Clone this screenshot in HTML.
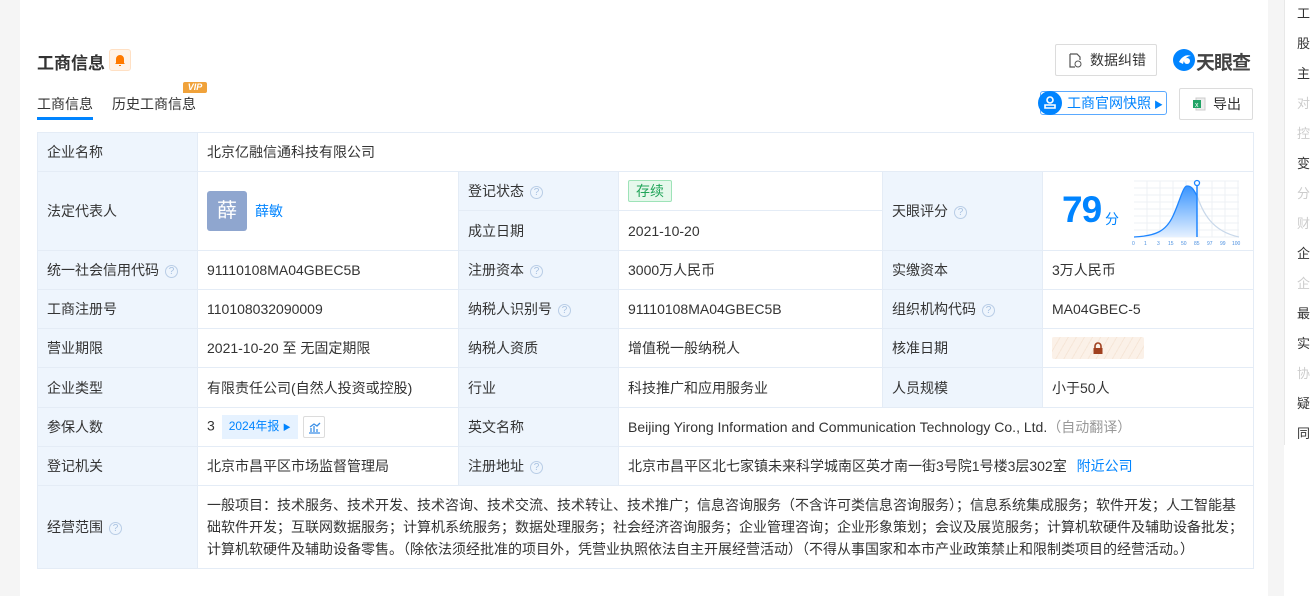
<!DOCTYPE html>
<html><head><meta charset="utf-8">
<style>
*{margin:0;padding:0;box-sizing:border-box}
body{width:1310px;height:596px;overflow:hidden;background:#f5f5f5;font-family:"Liberation Sans","Noto Sans CJK SC",sans-serif;font-size:14px;color:#333;position:relative}
.card{position:absolute;left:20px;top:0;width:1248px;height:596px;background:#fff}
.side{position:absolute;left:1284px;top:0;width:26px;height:596px;background:#fff}
.side .ln{position:absolute;left:0;top:0;width:1px;height:445px;background:#e8e8e8}
.side div.t{position:absolute;left:13px;font-size:13px;line-height:16px;width:20px;overflow:hidden;white-space:nowrap}
.abs{position:absolute}
table{position:absolute;left:37px;top:132px;width:1216px;border-collapse:collapse;table-layout:fixed}
td{border:1px solid #e4ecf6;padding:0 0 0 9px;height:39px;vertical-align:middle;white-space:nowrap}
td.l{background:#eef5fd}
.q{display:inline-block;width:13px;height:13px;border:1px solid #b9cde6;border-radius:50%;color:#a9c2e2;font-size:10px;line-height:11px;text-align:center;vertical-align:middle;margin-left:6px}
.blue{color:#0084ff}
</style></head><body>
<div class="card"></div>
<div class="side"><div class="ln"></div>
<div class="t" style="top:6px">工</div><div class="t" style="top:36px">股</div><div class="t" style="top:66px">主</div><div class="t" style="top:96px;color:#ccc">对</div><div class="t" style="top:126px;color:#ccc">控</div><div class="t" style="top:156px">变</div><div class="t" style="top:186px;color:#ccc">分</div><div class="t" style="top:216px;color:#ccc">财</div><div class="t" style="top:246px">企</div><div class="t" style="top:276px;color:#ccc">企</div><div class="t" style="top:306px">最</div><div class="t" style="top:336px">实</div><div class="t" style="top:366px;color:#ccc">协</div><div class="t" style="top:396px">疑</div><div class="t" style="top:426px">同</div>
</div>

<div class="abs" style="left:37px;top:49px;font-size:17px;font-weight:bold;color:#333">工商信息</div>
<div class="abs" style="left:109px;top:49px;width:22px;height:22px;background:#fff3e8;border:1px solid #ffe0c4;border-radius:3px"><svg width="20" height="20" viewBox="0 0 20 20"><path d="M6 13V9a4 4 0 018 0v4l1 1H5z M9 15h2v1H9z" fill="#ff7a00"/></svg></div>
<div class="abs" style="left:37px;top:94px;font-size:14px;color:#333">工商信息</div>
<div class="abs" style="left:37px;top:117px;width:56px;height:3px;background:#0084ff"></div>
<div class="abs" style="left:112px;top:94px;font-size:14px;color:#333">历史工商信息</div>
<div class="abs" style="left:183px;top:82px;width:24px;height:11px;background:#f0a23a;border-radius:2px 2px 2px 0;color:#fff;font-size:9px;font-weight:bold;font-style:italic;line-height:11px;text-align:center">VIP</div>

<div class="abs" style="left:1055px;top:44px;width:102px;height:32px;border:1px solid #dcdcdc;border-radius:2px;font-size:14px;line-height:30px;padding-left:34px">数据纠错
<svg class="abs" style="left:12px;top:8px" width="14" height="15" viewBox="0 0 14 15"><path d="M2 1h7l3 3v3M2 1v13h5" fill="none" stroke="#555" stroke-width="1.2"/><circle cx="10" cy="11" r="3" fill="none" stroke="#555"/></svg></div>
<div class="abs" style="left:1172px;top:48px;width:24px;height:24px"><svg width="24" height="24" viewBox="0 0 24 24"><circle cx="12" cy="12" r="11" fill="#0084ff"/><path d="M7 14c3-6 8-8 12-6-4 0-7 3-8 8z" fill="#fff"/><circle cx="15" cy="13" r="3" fill="#fff"/></svg></div>
<div class="abs" style="left:1196px;top:48px;font-size:19px;font-weight:bold;color:#444;letter-spacing:-1px">天眼查</div>

<div class="abs" style="left:1040px;top:91px;width:127px;height:24px;border:1px solid #5aa9ff;border-radius:3px;color:#0084ff;font-size:14px;line-height:22px;padding-left:26px">工商官网快照<span style="font-size:9px;margin-left:3px">▶</span></div>
<div class="abs" style="left:1038px;top:91px;width:24px;height:24px;border-radius:50%;background:#0084ff"><svg width="24" height="24" viewBox="0 0 24 24"><circle cx="12" cy="9" r="3" fill="none" stroke="#fff" stroke-width="1.6"/><path d="M7 17v-3h10v3z" fill="none" stroke="#fff" stroke-width="1.6"/></svg></div>
<div class="abs" style="left:1179px;top:88px;width:74px;height:32px;border:1px solid #dcdcdc;border-radius:2px;font-size:14px;line-height:30px;padding-left:33px">导出
<svg class="abs" style="left:12px;top:8px" width="14" height="14" viewBox="0 0 14 14"><rect x="4" y="1" width="9" height="12" fill="#eee" stroke="#ccc"/><rect x="1" y="3" width="8" height="8" fill="#21a366"/><text x="3" y="10" font-size="7" fill="#fff" font-family="Liberation Sans">x</text></svg></div>

<table>
<colgroup><col style="width:160px"><col style="width:261px"><col style="width:160px"><col style="width:264px"><col style="width:160px"><col style="width:211px"></colgroup>
<tr><td class="l">企业名称</td><td colspan="5">北京亿融信通科技有限公司</td></tr>
<tr><td class="l" rowspan="2">法定代表人</td><td rowspan="2"><span style="display:inline-block;width:40px;height:40px;background:#8fa6cf;border-radius:3px;color:#fff;font-size:20px;line-height:40px;text-align:center;vertical-align:middle">薛</span><span class="blue" style="margin-left:8px;vertical-align:middle">薛敏</span></td><td class="l">登记状态<span class="q">?</span></td><td><span style="display:inline-block;border:1px solid #9ee3b8;background:#e6f8ec;color:#22a55a;padding:0 7px;line-height:20px;border-radius:2px">存续</span></td><td class="l" rowspan="2">天眼评分<span class="q">?</span></td><td rowspan="2" style="position:relative;padding:0">
<span class="abs" style="left:19px;top:17px;font-size:37px;font-weight:bold;color:#0084ff;letter-spacing:-1px">79</span><span class="abs" style="left:62px;top:37px;font-size:14px;color:#0084ff">分</span>
<svg class="abs" style="left:88px;top:4px" width="112" height="72" viewBox="0 0 112 72">
<defs><linearGradient id="g" x1="0" y1="0" x2="0" y2="1"><stop offset="0" stop-color="#3894ff"/><stop offset="1" stop-color="#e6f1ff"/></linearGradient></defs>
<g stroke="#eef0f4" stroke-width="1"><path d="M3 5h105M3 12h105M3 19h105M3 26h105M3 33h105M3 40h105M3 47h105M3 54h105M3 61h105M16 5v56M29 5v56M42 5v56M55 5v56M68 5v56M81 5v56M94 5v56M107 5v56"/></g>
<path d="M3 61C25 60 35 55 42 40S52 10 56 10S62 12 66 20V61Z" fill="url(#g)"/>
<path d="M3 61C25 60 35 55 42 40S52 10 56 10S62 12 66 20" fill="none" stroke="#1f86ff" stroke-width="1.3"/>
<path d="M66 20C72 36 80 55 108 61" fill="none" stroke="#c8d8ea" stroke-width="1.2"/>
<path d="M66 8V61" stroke="#1f86ff" stroke-width="1.5"/><circle cx="66" cy="7" r="2.5" fill="#fff" stroke="#1f86ff" stroke-width="1.3"/>
<g font-size="5" fill="#4a8fe0" font-family="Liberation Sans"><text x="1" y="69">0</text><text x="13" y="69">1</text><text x="26" y="69">3</text><text x="37" y="69">15</text><text x="50" y="69">50</text><text x="63" y="69">85</text><text x="76" y="69">97</text><text x="89" y="69">99</text><text x="101" y="69">100</text></g>
</svg></td></tr>
<tr><td class="l" style="height:40px">成立日期</td><td>2021-10-20</td></tr>
<tr><td class="l">统一社会信用代码<span class="q">?</span></td><td>91110108MA04GBEC5B</td><td class="l">注册资本<span class="q">?</span></td><td>3000万人民币</td><td class="l">实缴资本</td><td>3万人民币</td></tr>
<tr><td class="l">工商注册号</td><td>110108032090009</td><td class="l">纳税人识别号<span class="q">?</span></td><td>91110108MA04GBEC5B</td><td class="l">组织机构代码<span class="q">?</span></td><td>MA04GBEC-5</td></tr>
<tr><td class="l">营业期限</td><td>2021-10-20 至 无固定期限</td><td class="l">纳税人资质</td><td>增值税一般纳税人</td><td class="l">核准日期</td><td><span style="display:inline-block;width:92px;height:22px;background:repeating-linear-gradient(-60deg,#fbf1e8 0 6px,#f6e6d8 6px 7px);border-radius:2px;vertical-align:middle;position:relative"><svg class="abs" style="left:39px;top:4px" width="14" height="14" viewBox="0 0 14 14"><path d="M4 7V5a3 3 0 016 0v2" fill="none" stroke="#a0401f" stroke-width="1.6"/><rect x="2.5" y="7" width="9" height="6" fill="#a0401f"/></svg></span></td></tr>
<tr><td class="l" style="height:40px">企业类型</td><td>有限责任公司(自然人投资或控股)</td><td class="l">行业</td><td>科技推广和应用服务业</td><td class="l">人员规模</td><td>小于50人</td></tr>
<tr><td class="l">参保人数</td><td>3 <span style="display:inline-block;background:#e6f2ff;color:#0084ff;font-size:12px;padding:0 7px;line-height:22px;margin-left:3px;vertical-align:middle">2024年报 <span style="font-size:8px">▶</span></span><span style="display:inline-block;width:22px;height:22px;border:1px solid #dcdcdc;border-radius:2px;margin-left:5px;vertical-align:middle;position:relative"><svg class="abs" style="left:4px;top:4px" width="13" height="13" viewBox="0 0 13 13"><path d="M1 12h11M3 11V7M6 11V5M9 11V8M2 6l4-3 3 2 3-3" fill="none" stroke="#3a8ee6" stroke-width="1.3"/></svg></span></td><td class="l">英文名称</td><td colspan="3">Beijing Yirong Information and Communication Technology Co., Ltd.<span style="color:#999">（自动翻译）</span></td></tr>
<tr><td class="l">登记机关</td><td>北京市昌平区市场监督管理局</td><td class="l">注册地址<span class="q">?</span></td><td colspan="3">北京市昌平区北七家镇未来科学城南区英才南一街3号院1号楼3层302室 <span class="blue" style="margin-left:6px">附近公司</span></td></tr>
<tr><td class="l" style="height:83px">经营范围<span class="q">?</span></td><td colspan="5" style="white-space:normal;line-height:22px;padding-right:6px">一般项目：技术服务、技术开发、技术咨询、技术交流、技术转让、技术推广；信息咨询服务（不含许可类信息咨询服务）；信息系统集成服务；软件开发；人工智能基础软件开发；互联网数据服务；计算机系统服务；数据处理服务；社会经济咨询服务；企业管理咨询；企业形象策划；会议及展览服务；计算机软硬件及辅助设备批发；计算机软硬件及辅助设备零售。（除依法须经批准的项目外，凭营业执照依法自主开展经营活动）（不得从事国家和本市产业政策禁止和限制类项目的经营活动。）</td></tr>
</table>
</body></html>
